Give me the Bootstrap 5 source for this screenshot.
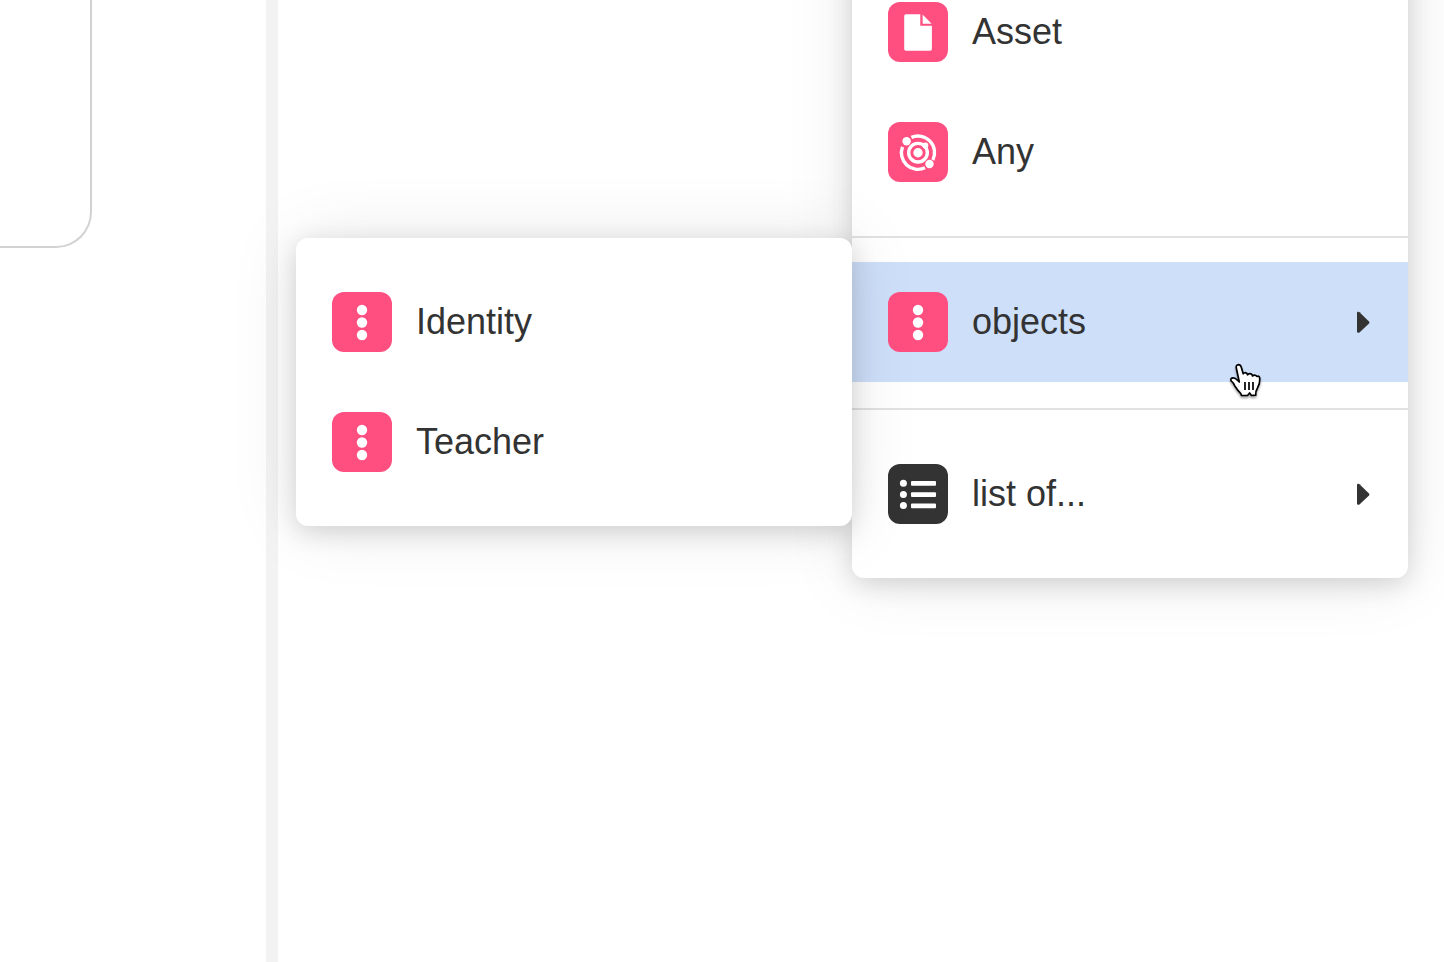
<!DOCTYPE html>
<html lang="en">
<head>
<meta charset="utf-8">
<meta name="viewport" content="width=device-width, initial-scale=1">
<title>Field type</title>
<link rel="stylesheet" href="https://cdn.jsdelivr.net/npm/bootstrap@5.3.0/dist/css/bootstrap.min.css">
<style>
  body { font-family: "Liberation Sans", Arial, sans-serif; font-size: 36px; line-height: 44px; color: #333; background: #fff; }
  .side-pane { flex: 0 0 278px; border-right: 12px solid #f3f3f3; }
  .side-box { width: 92px; height: 248px; border: solid #d2d2d2; border-width: 0 2px 2px 0; border-bottom-right-radius: 36px; }
  .type-menu { width: 556px; padding: 24px 0; background: #fff; border-radius: 12px; box-shadow: 0 0 72px rgba(0,0,0,.09), 0 6px 26px rgba(0,0,0,.15); }
  .main-menu { top: -292px; right: 36px; padding-top: 264px; }
  .sub-menu { top: -24px; right: 100%; }
  .type-item { height: 120px; padding: 0 36px; gap: 24px; border: 0; background: transparent; color: inherit; text-align: left; }
  .type-item.is-open { background: #cedff9; }
  .type-item svg { flex: none; }
  .tile { width: 60px; height: 60px; border-radius: 12px; background: #ff4f81; fill: #fff; }
  .tile-dark { background: #333; }
  .rule { height: 2px; margin: 24px 0; background: #e2e2e2; }
  .rule-after { margin-top: 26px; }
  .hand { right: 144px; top: 100px; pointer-events: none; filter: drop-shadow(0 2px 1px rgba(0,0,0,.35)); }
</style>
</head>
<body class="overflow-hidden">
<svg class="d-none" aria-hidden="true">
  <symbol id="dots" viewBox="0 0 60 60"><circle cx="30" cy="18" r="5.2"/><circle cx="30" cy="30.500" r="5.2"/><circle cx="30" cy="43" r="5.2"/></symbol>
  <symbol id="caret" viewBox="0 0 16 22"><path d="M1 2Q1 .5 2.500 .8L3.500 1.200L13 10.500Q13.800 11.500 13 12.500L3.500 21.500Q1 22.500 1 20.500Z"/></symbol>
</svg>
<div class="d-flex vh-100">
  <aside class="side-pane"><div class="side-box"></div></aside>
  <main class="flex-grow-1 position-relative">
    <div class="type-menu main-menu position-absolute">
      <button type="button" class="type-item d-flex align-items-center w-100">
        <svg class="tile" viewBox="0 0 60 60" aria-hidden="true"><path d="M18 12.300H32.300V23.800H43.900V47Q43.900 48.800 42.200 48.800H18Q16.200 48.800 16.200 47V14Q16.200 12.300 18 12.300Z"/><path d="M34.600 12.600L43.600 21.800H34.600Z"/></svg>
        <span>Asset</span>
      </button>
      <button type="button" class="type-item d-flex align-items-center w-100">
        <svg class="tile" viewBox="0 0 60 60" aria-hidden="true">
          <circle cx="30" cy="30.700" r="4.700"/>
          <g fill="none" stroke="#fff" stroke-width="3.400"><circle cx="30" cy="30.700" r="9.300"/><path d="M23.400 15.400A16.600 16.600 0 0 1 44.900 37.900"/><path d="M14.500 24.800A16.600 16.600 0 0 0 37 45.800"/></g>
          <circle cx="18.600" cy="19.200" r="4.200"/><circle cx="41.500" cy="42" r="4.200"/><circle cx="37.300" cy="23.500" r="3"/>
        </svg>
        <span>Any</span>
      </button>
      <div class="rule"></div>
      <div class="position-relative">
        <button type="button" class="type-item is-open d-flex align-items-center w-100" aria-expanded="true">
          <svg class="tile" aria-hidden="true"><use href="#dots"/></svg>
          <span class="flex-grow-1">objects</span>
          <svg width="16" height="22" fill="#333" aria-hidden="true"><use href="#caret"/></svg>
        </button>
        <div class="type-menu sub-menu position-absolute">
          <button type="button" class="type-item d-flex align-items-center w-100">
            <svg class="tile" aria-hidden="true"><use href="#dots"/></svg>
            <span>Identity</span>
          </button>
          <button type="button" class="type-item d-flex align-items-center w-100">
            <svg class="tile" aria-hidden="true"><use href="#dots"/></svg>
            <span>Teacher</span>
          </button>
        </div>
        <svg class="hand position-absolute" width="36" height="38" viewBox="0 0 36 38" aria-hidden="true">
          <path d="M8.300 6Q7.700 2.900 10.500 2.700Q12.500 2.700 13.300 5.200L15.200 11.800Q16.500 9.800 19 11.500L19.500 12.800Q21.800 10.600 24.200 12.800L24.500 14Q27 12 29 14.500Q31.800 13.300 31.800 17Q32 22 29.500 26Q27.500 29 27.700 33.200L23.500 33.500L21.600 31L19.500 33.500H13.500Q13.200 31.500 10.200 28.700L6.500 23.400Q5.500 21 3.400 19.200Q2 17.200 4 16.100Q6.500 15 9.800 18.500L11.300 20Z" fill="#fff" stroke="#000" stroke-width="1.700" stroke-linejoin="round"/>
          <path d="M17 20V28M21 20V28M25 20V28" stroke="#000" stroke-width="1.700"/>
        </svg>
      </div>
      <div class="rule rule-after"></div>
      <button type="button" class="type-item d-flex align-items-center w-100" aria-expanded="false">
        <svg class="tile tile-dark" viewBox="0 0 60 60" aria-hidden="true"><circle cx="15.400" cy="19.200" r="3.500"/><circle cx="15.400" cy="30.400" r="3.500"/><circle cx="15.400" cy="41.600" r="3.500"/><rect x="23" y="17" width="25" height="4.800" rx="1"/><rect x="23" y="28.200" width="25" height="4.800" rx="1"/><rect x="23" y="39.400" width="25" height="4.800" rx="1"/></svg>
        <span class="flex-grow-1">list of...</span>
        <svg width="16" height="22" fill="#333" aria-hidden="true"><use href="#caret"/></svg>
      </button>
    </div>
  </main>
</div>
<script src="https://cdn.jsdelivr.net/npm/bootstrap@5.3.0/dist/js/bootstrap.bundle.min.js"></script>
</body>
</html>
